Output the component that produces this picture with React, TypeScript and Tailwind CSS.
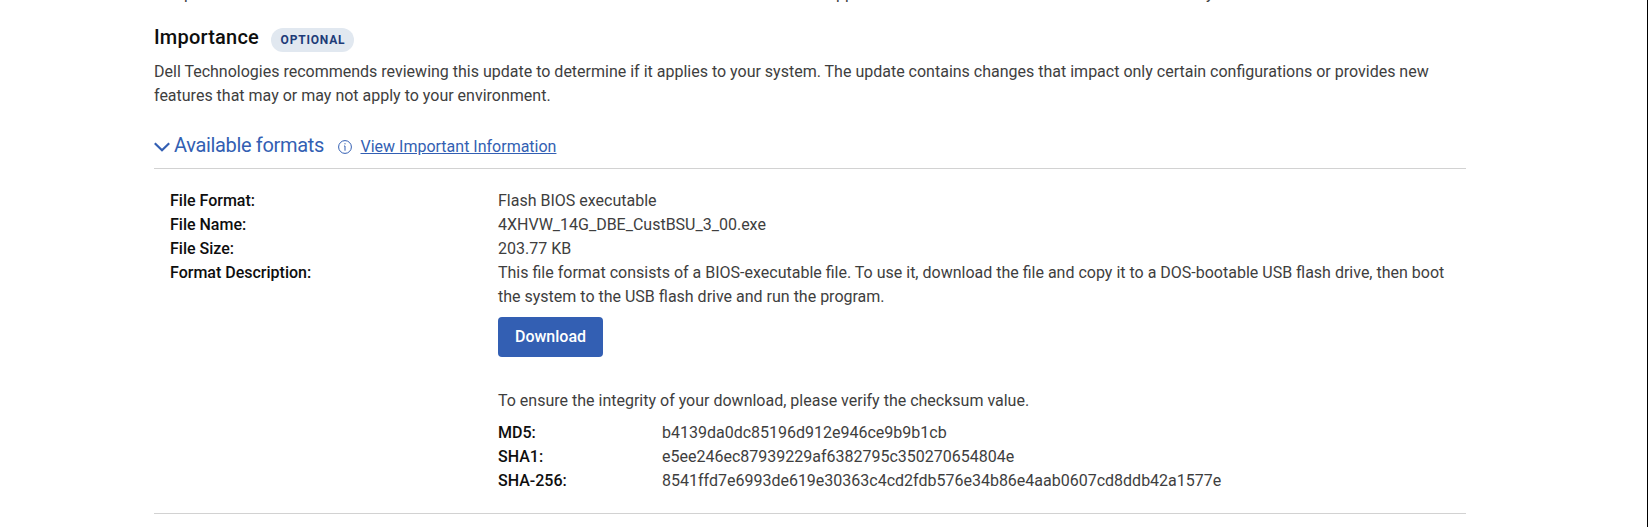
import React from 'react';

const details = [
  ['File Format:', 'Flash BIOS executable'],
  ['File Name:', '4XHVW_14G_DBE_CustBSU_3_00.exe'],
  ['File Size:', '203.77 KB'],
];
const sums = [
  ['MD5:', 'b4139da0dc85196d912e946ce9b9b1cb'],
  ['SHA1:', 'e5ee246ec87939229af6382795c350270654804e'],
  ['SHA-256:', '8541ffd7e6993de619e30363c4cd2fdb576e34b86e4aab0607cd8ddb42a1577e'],
];

export default function App() {
  return (
    <div className="flex h-[527px] w-[1648px] justify-between overflow-hidden bg-white font-[Roboto,sans-serif] text-[16px] leading-6 text-[#3e3e3e]">
      <main className="ml-[154px] w-[1312px]">
        {/* Tail of the preceding paragraph, scrolled past the top edge */}
        <div className="-mt-[18px] flex h-6 pl-[30px]">
          <span className="w-[652px]">p</span>
          <span className="w-[370px]">pp</span>
          <span>y</span>
        </div>
        <div className="mt-[17px] flex h-[28px] items-center">
          <h2 className="text-[20px] font-medium leading-7 tracking-[0.2px] text-[#0e0e0e]">Importance</h2>
          <span className="ml-3 mt-[6px] flex h-6 w-[83px] items-center justify-center rounded-full bg-[#e1e8f0] pl-px text-[12px] font-bold tracking-[0.8px] text-[#1d3b78]">OPTIONAL</span>
        </div>
        <p className="mt-[9px]">Dell Technologies recommends reviewing this update to determine if it applies to your system. The update contains changes that impact only certain configurations or provides new<br />features that may or may not apply to your environment.</p>
        <div className="mt-[24px] flex h-[37px] items-start border-b border-[#d2d2d2] text-[#335fb3]">
          <svg className="mt-[7px] h-4 w-4" viewBox="0 0 16 16" fill="none" stroke="currentColor" strokeWidth="2.2"><path d="M.8 4.2 8 11.2l7.2-7" /></svg>
          <span className="ml-[4px] w-[149px] whitespace-nowrap text-[20px] leading-[26px] tracking-[-0.34px]">Available formats</span>
          <svg className="ml-[15px] mt-[8px] h-[14px] w-[14px]" viewBox="0 0 14 14" fill="none" stroke="currentColor" strokeWidth="1"><circle cx="7" cy="7" r="6.4" /><path d="M6.4 3.8h1.2M6.1 6H7v4.7" /></svg>
          <a className="ml-[8.5px] mt-[3px] underline">View Important Information</a>
        </div>
        <div className="pl-4 pt-[20px]">
          {details.map(([k, v]) => (
            <div className="flex" key={k}><b className="w-[328px] font-medium text-[#0e0e0e]">{k}</b><span>{v}</span></div>
          ))}
          <div className="flex"><b className="w-[328px] font-medium text-[#0e0e0e]">Format Description:</b><p>This file format consists of a BIOS-executable file. To use it, download the file and copy it to a DOS-bootable USB flash drive, then boot<br />the system to the USB flash drive and run the program.</p></div>
          <div className="pl-[328px]">
            <button className="mt-2 block h-10 w-[105px] rounded-[4px] bg-[#335fb3] font-medium text-white">Download</button>
            <p className="mt-[32px]">To ensure the integrity of your download, please verify the checksum value.</p>
            <div className="mt-2">
              {sums.map(([k, v]) => (
                <div className="flex" key={k}><b className="w-[164px] font-medium text-[#0e0e0e]">{k}</b><span>{v}</span></div>
              ))}
            </div>
          </div>
        </div>
        <div className="mt-[20px] border-b border-[#d2d2d2]" />
      </main>
      <div className="w-px bg-black" />
    </div>
  );
}
